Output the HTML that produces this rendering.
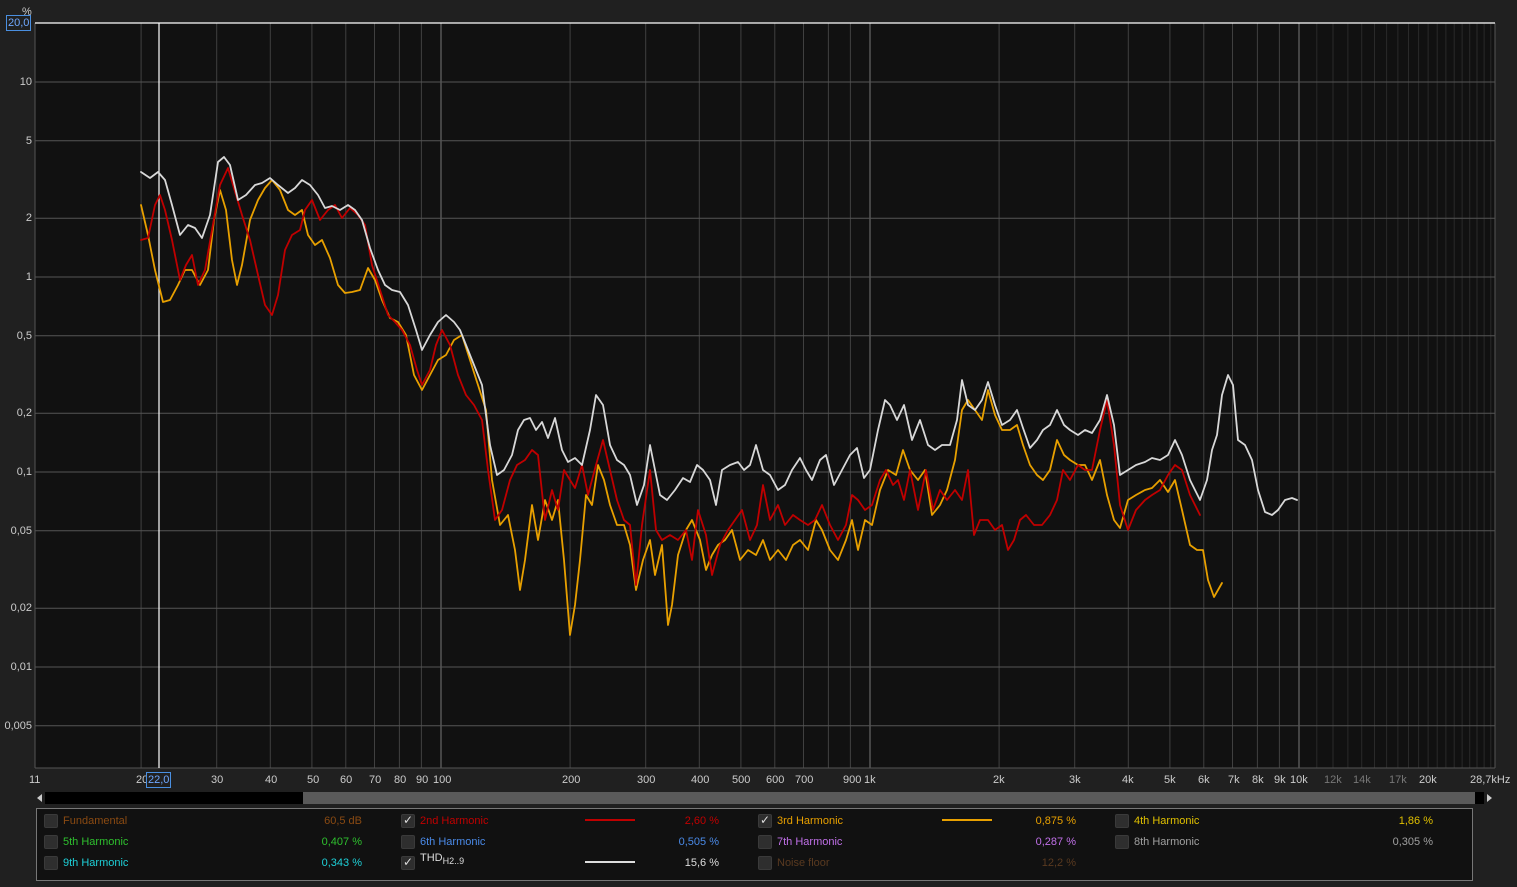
<!DOCTYPE html>
<html><head><meta charset="utf-8"><style>
body{margin:0;width:1517px;height:885px;background:#202020;font-family:"Liberation Sans",sans-serif;overflow:hidden;position:relative;color:#ccc}
.t{position:absolute;font-size:11px;white-space:nowrap}
.cb{position:absolute;width:12px;height:12px;background:#2e2e2e;border:1px solid #3a3a3a;border-radius:2px}
.ck::after{content:"✓";position:absolute;left:1px;top:-2px;font-size:12px;color:#ddd}
.r{text-align:right}
.lg{position:absolute;left:0;top:2px;width:1517px;height:885px}
</style></head><body>
<svg width="1517" height="885" style="position:absolute;left:0;top:0">
<rect x="35" y="23" width="1460" height="745" fill="#111"/>
<g id="grid"></g>
<line x1="35" y1="23" x2="1495" y2="23" stroke="#fff" stroke-width="1.2"/>
<line x1="159" y1="23" x2="159" y2="768" stroke="#fff" stroke-width="1.2"/>
<g fill="none" stroke-width="1.8" stroke-linejoin="round" stroke-linecap="round">
<polyline stroke="#e8a000" points="141,205 148,235 155,270 163,302 170,300 178,285 185,270 192,270 200,285 208,270 214,220 220,190 226,210 232,260 237,285 242,265 250,220 258,200 265,188 272,180 280,190 288,210 295,215 302,210 308,235 315,245 322,240 330,258 338,285 345,293 352,292 360,290 368,268 375,280 382,300 390,318 398,322 406,335 414,375 422,390 430,375 438,360 446,355 454,340 462,335 470,360 478,385 486,410 492,480 500,525 508,515 515,550 520,590 525,560 532,505 538,540 545,500 552,520 558,500 564,560 570,635 575,605 580,560 586,495 592,505 598,465 604,480 610,505 617,525 624,525 630,545 636,590 643,560 650,540 655,575 662,545 668,625 672,605 678,555 686,530 692,520 700,540 706,570 712,555 718,545 725,540 732,530 740,560 748,550 756,555 763,540 770,560 778,550 786,560 793,545 800,540 808,550 816,520 822,530 830,550 838,560 846,540 852,520 858,550 865,520 872,525 880,490 888,470 896,475 903,450 910,470 918,480 925,470 932,515 940,505 947,490 955,460 962,410 968,400 975,410 982,420 988,390 995,415 1002,430 1010,430 1017,425 1023,445 1030,465 1037,475 1043,480 1050,470 1057,440 1064,455 1070,460 1078,465 1085,465 1092,480 1100,460 1107,495 1114,520 1120,528 1128,500 1136,495 1145,490 1152,488 1160,480 1168,492 1175,480 1182,510 1190,545 1197,550 1203,550 1208,580 1214,597 1218,590 1222,583"/>
<polyline stroke="#c00000" points="141,240 148,238 155,205 160,195 165,210 172,240 180,280 186,265 192,255 198,285 205,270 212,230 220,185 228,168 236,195 242,215 250,240 258,275 265,305 272,315 278,295 285,250 292,235 300,230 305,210 312,200 320,220 328,210 335,205 342,218 350,208 358,215 365,225 372,265 380,290 388,315 395,322 402,330 410,345 417,370 422,385 430,370 436,345 442,330 450,345 458,375 466,395 474,405 482,420 488,470 495,520 502,510 510,480 517,465 525,460 532,450 538,455 545,520 552,490 558,510 564,470 570,480 575,488 582,465 588,495 596,465 603,440 610,470 617,500 624,520 630,525 636,585 642,525 650,470 656,530 662,540 670,535 678,540 686,530 692,560 698,510 706,535 712,575 720,545 728,530 735,520 742,510 750,540 757,525 763,485 770,520 778,505 785,525 793,515 800,520 808,525 815,520 822,505 830,525 838,540 846,525 852,495 858,500 865,510 872,505 880,480 886,470 893,485 898,480 904,500 910,470 918,510 926,470 933,510 940,490 947,500 955,490 962,500 968,470 974,535 980,520 988,520 995,530 1002,525 1008,550 1014,540 1020,520 1026,515 1034,525 1042,525 1050,515 1057,500 1063,470 1070,480 1078,465 1085,470 1092,470 1100,430 1107,400 1114,445 1120,505 1128,530 1136,510 1145,500 1152,495 1160,490 1168,475 1175,465 1182,470 1190,495 1200,515"/>
<polyline stroke="#d8d8d8" points="141,172 150,178 158,172 165,180 172,205 180,235 188,225 195,228 202,238 210,215 218,162 224,157 230,165 238,200 246,195 255,185 262,183 270,178 278,185 288,193 295,188 302,180 310,185 318,195 325,208 332,206 340,210 348,205 355,210 362,220 370,248 378,270 385,285 392,290 400,292 408,305 416,330 422,350 430,335 438,322 446,315 454,322 460,330 466,345 474,365 482,385 490,445 497,475 504,470 512,455 518,430 524,420 530,418 536,430 542,422 548,438 555,418 562,450 568,462 575,458 582,465 590,430 596,395 603,405 610,445 617,460 624,465 630,475 637,505 644,485 650,445 655,470 660,495 667,500 675,490 683,478 690,482 697,465 703,470 710,480 716,505 722,470 730,465 738,462 744,470 750,465 756,445 763,470 770,475 778,490 785,485 792,470 800,458 806,470 812,480 820,460 826,455 834,485 842,470 850,455 857,448 864,478 870,470 878,430 885,400 890,405 897,420 904,405 912,440 920,420 928,445 935,450 942,445 950,445 957,420 962,380 968,405 975,410 982,400 988,382 995,405 1002,425 1010,420 1017,410 1023,428 1030,448 1037,440 1043,430 1050,425 1057,410 1064,425 1070,430 1078,435 1085,430 1092,433 1100,420 1107,395 1114,425 1120,475 1128,470 1136,465 1145,462 1152,458 1160,460 1168,455 1175,440 1182,455 1190,480 1200,500 1207,480 1212,450 1217,435 1222,395 1228,375 1233,385 1238,440 1245,445 1252,460 1258,490 1265,512 1272,515 1278,510 1285,500 1292,498 1297,500"/>
</g>
<rect x="45" y="792" width="258" height="12" fill="#000"/>
<rect x="303" y="792" width="1172" height="12" fill="#5a5a5a"/>
<rect x="1475" y="792" width="9" height="12" fill="#000"/>
<polygon points="37,798 42,794 42,802" fill="#ccc"/>
<polygon points="1492,798 1487,794 1487,802" fill="#ccc"/>
<rect x="36.5" y="808.5" width="1436" height="72" fill="#111" stroke="#777"/>
<line x1="585" y1="820" x2="635" y2="820" stroke="#c00000" stroke-width="2"/>
<line x1="942" y1="820" x2="992" y2="820" stroke="#e8a000" stroke-width="2"/>
<line x1="585" y1="862" x2="635" y2="862" stroke="#ddd" stroke-width="2"/>
</svg>
<script>
(function(){var g=document.getElementById('grid'),s='';
function X(f){return 441+429*Math.log10(f/100);}
var fs=[];for(var d=10;d<=10000;d*=10)for(var k=1;k<10;k++){var f=d*k;if(f>11&&f<=10000)fs.push(f);}
fs.forEach(function(f){var x=X(f).toFixed(1);var maj=(f==100||f==1000||f==10000);s+='<line x1="'+x+'" y1="23" x2="'+x+'" y2="768" stroke="'+(maj?'#777':'#404040')+'" stroke-width="1"/>';});
for(var f=11000;f<=28000;f+=1000){var x=X(f).toFixed(1);s+='<line x1="'+x+'" y1="23" x2="'+x+'" y2="768" stroke="#2a2a2a"/>';}
[10,5,2,1,0.5,0.2,0.1,0.05,0.02,0.01,0.005].forEach(function(v){var y=(82+195*Math.log10(10/v)).toFixed(1);s+='<line x1="35" y1="'+y+'" x2="1495" y2="'+y+'" stroke="#555"/>';});
s+='<line x1="35" y1="23" x2="35" y2="768" stroke="#555"/><line x1="1495" y1="23" x2="1495" y2="768" stroke="#555"/><line x1="35" y1="768" x2="1495" y2="768" stroke="#555"/>';
g.innerHTML=s;})();
</script>
<div class="t" style="left:22px;top:6px;color:#ccc">%</div>
<div class="t" style="left:6px;top:15px;border:1px solid #4a8fe0;color:#6fa8ff;padding:0 1px;line-height:14px">20,0</div>
<div class="t r" style="right:1485px;top:76px">10</div>
<div class="t r" style="right:1485px;top:135px">5</div>
<div class="t r" style="right:1485px;top:212px">2</div>
<div class="t r" style="right:1485px;top:271px">1</div>
<div class="t r" style="right:1485px;top:330px">0,5</div>
<div class="t r" style="right:1485px;top:407px">0,2</div>
<div class="t r" style="right:1485px;top:466px">0,1</div>
<div class="t r" style="right:1485px;top:525px">0,05</div>
<div class="t r" style="right:1485px;top:602px">0,02</div>
<div class="t r" style="right:1485px;top:661px">0,01</div>
<div class="t r" style="right:1485px;top:720px">0,005</div>
<div style="position:absolute;top:774px;left:0;width:1517px;font-size:11px;color:#ccc">
<span class="t" style="left:29px">11</span><span class="t" style="left:136px">20</span>
<span class="t" style="left:146px;top:-2px;border:1px solid #4a8fe0;color:#6fa8ff;background:#202020;padding:0 1px;line-height:14px">22,0</span>
<span class="t" style="left:211px">30</span><span class="t" style="left:265px">40</span><span class="t" style="left:307px">50</span><span class="t" style="left:340px">60</span><span class="t" style="left:369px">70</span><span class="t" style="left:394px">80</span><span class="t" style="left:416px">90</span><span class="t" style="left:433px">100</span>
<span class="t" style="left:562px">200</span><span class="t" style="left:637px">300</span><span class="t" style="left:691px">400</span><span class="t" style="left:732px">500</span><span class="t" style="left:766px">600</span><span class="t" style="left:795px">700</span><span class="t" style="left:843px">900</span><span class="t" style="left:864px">1k</span>
<span class="t" style="left:993px">2k</span><span class="t" style="left:1069px">3k</span><span class="t" style="left:1122px">4k</span><span class="t" style="left:1164px">5k</span><span class="t" style="left:1198px">6k</span><span class="t" style="left:1228px">7k</span><span class="t" style="left:1252px">8k</span><span class="t" style="left:1274px">9k</span><span class="t" style="left:1290px">10k</span>
<span class="t" style="left:1324px;color:#777">12k</span><span class="t" style="left:1353px;color:#777">14k</span><span class="t" style="left:1389px;color:#777">17k</span><span class="t" style="left:1419px">20k</span><span class="t" style="left:1470px">28,7kHz</span>
</div>
<div class="lg">
<div class="cb" style="left:44px;top:812px"></div><div class="t" style="left:63px;top:813px;color:#8a4a12">Fundamental</div><div class="t r" style="right:1155px;top:813px;color:#8a4a12">60,5 dB</div>
<div class="cb" style="left:44px;top:833px"></div><div class="t" style="left:63px;top:834px;color:#2ec02e">5th Harmonic</div><div class="t r" style="right:1155px;top:834px;color:#2ec02e">0,407 %</div>
<div class="cb" style="left:44px;top:854px"></div><div class="t" style="left:63px;top:855px;color:#1ed0d8">9th Harmonic</div><div class="t r" style="right:1155px;top:855px;color:#1ed0d8">0,343 %</div>
<div class="cb ck" style="left:401px;top:812px"></div><div class="t" style="left:420px;top:813px;color:#c00000">2nd Harmonic</div><div class="t r" style="right:798px;top:813px;color:#c00000">2,60 %</div>
<div class="cb" style="left:401px;top:833px"></div><div class="t" style="left:420px;top:834px;color:#4a8ae8">6th Harmonic</div><div class="t r" style="right:798px;top:834px;color:#4a8ae8">0,505 %</div>
<div class="cb ck" style="left:401px;top:854px"></div><div class="t" style="left:420px;top:850px;color:#ddd">THD<sub style="font-size:9px">H2..9</sub></div><div class="t r" style="right:798px;top:855px;color:#ddd">15,6 %</div>
<div class="cb ck" style="left:758px;top:812px"></div><div class="t" style="left:777px;top:813px;color:#e8a000">3rd Harmonic</div><div class="t r" style="right:441px;top:813px;color:#e8a000">0,875 %</div>
<div class="cb" style="left:758px;top:833px"></div><div class="t" style="left:777px;top:834px;color:#c070e8">7th Harmonic</div><div class="t r" style="right:441px;top:834px;color:#c070e8">0,287 %</div>
<div class="cb" style="left:758px;top:854px"></div><div class="t" style="left:777px;top:855px;color:#5a3a20">Noise floor</div><div class="t r" style="right:441px;top:855px;color:#5a3a20">12,2 %</div>
<div class="cb" style="left:1115px;top:812px"></div><div class="t" style="left:1134px;top:813px;color:#e0c000">4th Harmonic</div><div class="t r" style="right:84px;top:813px;color:#e0c000">1,86 %</div>
<div class="cb" style="left:1115px;top:833px"></div><div class="t" style="left:1134px;top:834px;color:#a0a0a0">8th Harmonic</div><div class="t r" style="right:84px;top:834px;color:#a0a0a0">0,305 %</div>
</div>
</body></html>
